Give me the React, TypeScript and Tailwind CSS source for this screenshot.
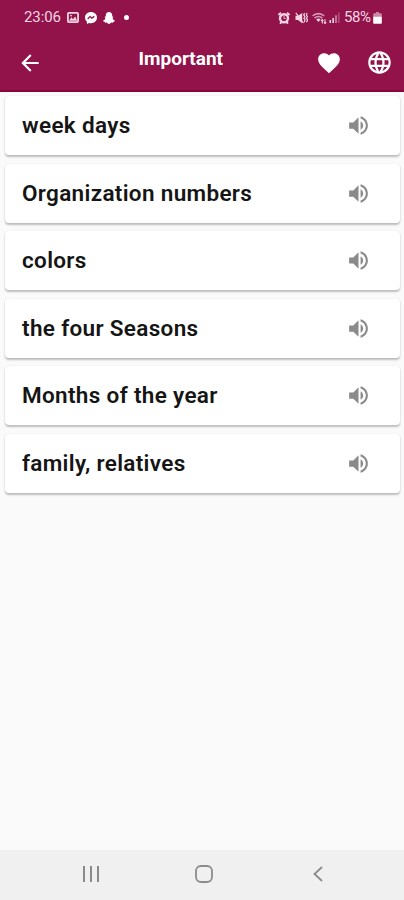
import {
  MdArrowBack,
  MdFavorite,
  MdLanguage,
  MdVolumeUp,
} from "react-icons/md";

const categories = [
  "week days",
  "Organization numbers",
  "colors",
  "the four Seasons",
  "Months of the year",
  "family, relatives",
];

const StatusBar = () => {
  return (
    <div className="flex h-[35px] items-center pl-6 pr-[22px] text-[#f3d5e2]">
      <span className="w-[37px] whitespace-nowrap text-[15px] tracking-[-0.1px]">
        23:06
      </span>
      {/* picture */}
      <svg className="ml-[6px] h-[11px] w-3" viewBox="0 0 12 11">
        <rect x="0.9" y="0.9" width="10.2" height="9.2" rx="1" fill="none" stroke="currentColor" strokeWidth="1.8" />
        <path d="M2 8.800 4.400 5.200 6 7.200 8.200 4.600l2 4.200z" fill="currentColor" />
        <circle cx="4" cy="3.600" r="0.9" fill="currentColor" />
      </svg>
      {/* messenger */}
      <svg className="ml-[6px] h-3 w-3 text-white" viewBox="0 0 12 12">
        <path d="M6 0C2.600 0 0 2.400 0 5.600c0 1.700.7 3.200 1.900 4.200V12l2-1.100c.7.200 1.400.3 2.100.3 3.400 0 6-2.400 6-5.600S9.400 0 6 0z" fill="currentColor" />
        <path d="M2.700 7 5 4.600l1.800 1.500L9.300 4.400" fill="none" stroke="#92124a" strokeWidth="1.300" />
      </svg>
      {/* snapchat */}
      <svg className="ml-[6px] h-3 w-3 text-white" viewBox="0 0 12 12">
        <path d="M6 0C4 0 2.800 1.400 2.800 3.300v1.300L1.500 4.700l.9 1.300C2 7.400 1.200 8.200 0 8.700c.3.800 1 .9 1.700 1l.3 1 1.700-.1C4.500 11.200 5.200 12 6 12s1.500-.8 2.300-1.400l1.700.1.300-1c.7-.1 1.400-.2 1.700-1C10.800 8.200 10 7.400 9.600 6l.9-1.300-1.300-.1V3.300C9.200 1.400 8 0 6 0z" fill="currentColor" />
      </svg>
      <span className="ml-[9px] size-[5px] rounded-full bg-white" />

      {/* alarm */}
      <svg className="ml-auto h-3 w-3" viewBox="0 0 12 12">
        <path d="M.4 3 3 .8M11.600 3 9 .8M2 11.600l1.500-1.600M10 11.600 8.500 10" stroke="currentColor" strokeWidth="2" />
        <circle cx="6" cy="6.200" r="4" fill="none" stroke="currentColor" strokeWidth="2.400" />
        <path d="M6 4v2.500h1.600" fill="none" stroke="currentColor" strokeWidth="0.900" />
      </svg>
      {/* vibrate with sound off */}
      <svg className="ml-[5px] h-3 w-[13px]" viewBox="0 0 13 12">
        <path d="M.5 3.800h2.500L7.200 1v10.200L3 8H.5z" fill="currentColor" />
        <path d="M.8.800 8.500 11" fill="none" stroke="currentColor" strokeWidth="1.200" />
        <path d="M9.600 1 8.700 3l1.300 1.500L8.900 6.200l1.200 1.600-.8 2.400M12.100 1l-.8 2 1.200 1.500-1.100 1.700 1.200 1.600-1 2.400" fill="none" stroke="currentColor" strokeWidth="1.200" />
      </svg>
      {/* wifi */}
      <svg className="ml-1 h-3 w-[15px]" viewBox="0 0 15 12">
        <path d="M.6 4C3.800.800 9 .800 12.200 4M2.600 6.100c2.200-2 5.400-2 7.600 0" fill="none" stroke="currentColor" strokeOpacity="0.700" strokeWidth="1.600" />
        <path d="M4.300 7.500a3.200 3.200 0 0 1 4.200 0L6.400 10z" fill="currentColor" />
        <path d="M10.300 11.500V7.500M9 8.800l1.300-1.300 1 1.300M13 7.300v4.200M11.900 10.300l1.100 1.200 1.200-1.200" fill="none" stroke="currentColor" strokeWidth="1.100" />
      </svg>
      {/* mobile signal */}
      <svg className="ml-[2px] h-[11px] w-[11px]" viewBox="0 0 11 11">
        <path d="M.5 8h1.600v3H.5zM3.400 6H5v5H3.400z" fill="currentColor" />
        <path d="M6.200 3.300h1.600V11H6.200z" fill="currentColor" fillOpacity="0.650" />
        <path d="M9 .500h1.600V11H9z" fill="currentColor" fillOpacity="0.300" />
      </svg>
      <span className="ml-1 w-[29px] whitespace-nowrap text-[15px] tracking-[-0.4px]">
        58%
      </span>
      {/* battery */}
      <svg className="h-3 w-[9px]" viewBox="0 0 9 12">
        <path d="M3 0h3v1.200h2q.8 0 .8.800V5H.2V2q0-.8.8-.8h2z" fill="currentColor" fillOpacity="0.600" />
        <path d="M.2 4.800h8.600V11q0 .8-.8.800H1Q.2 11.800.2 11z" fill="white" />
      </svg>
    </div>
  );
};

const Header = () => {
  return (
    <header className="h-[92px] border-b-2 border-[#870838] bg-[#92124a]">
      <StatusBar />
      <div className="flex h-[55px] items-center pl-[17px] pr-[11px] text-white">
        <button aria-label="Back">
          <MdArrowBack className="size-[26px]" />
        </button>
        <h1 className="ml-[95.500px] -mt-[7px] text-[19px] font-bold leading-6">
          Important
        </h1>
        <button className="ml-auto" aria-label="Favorites">
          <MdFavorite className="size-[26px]" />
        </button>
        <button className="ml-6" aria-label="Language">
          <MdLanguage className="size-[27px]" />
        </button>
      </div>
    </header>
  );
};

const CategoryCard = ({ title }: { title: string }) => {
  return (
    <li className="flex h-[59px] items-center justify-between rounded-[4px] bg-white pl-[17px] pr-[29px] shadow-[0_1.500px_2px_rgba(0,0,0,0.240),0_0_2px_rgba(0,0,0,0.040)]">
      <span className="-mt-px whitespace-nowrap text-[22.500px] font-semibold leading-[30px] tracking-[0.33px] text-[#151515]">
        {title}
      </span>
      <MdVolumeUp className="size-[25px] text-[#8a8a8a]" />
    </li>
  );
};

const NavigationBar = () => {
  return (
    <nav className="flex h-[50px] items-center bg-[#f0f0f0] pb-[2px] pl-[83px] text-[#8b8b8b]">
      <svg className="h-4 w-4" viewBox="0 0 16 16" fill="none" stroke="currentColor" strokeWidth="2">
        <path d="M1 0v16M8 0v16M15 0v16" />
      </svg>
      <svg className="ml-24 size-[18px]" viewBox="0 0 18 18" fill="none" stroke="currentColor" strokeWidth="1.800">
        <rect x="1" y="1" width="16" height="16" rx="5" />
      </svg>
      <svg className="ml-[100px] h-4 w-[10px]" viewBox="0 0 10 16" fill="none" stroke="currentColor" strokeWidth="1.800">
        <path d="M9 1 1.500 8 9 15" />
      </svg>
    </nav>
  );
};

const App = () => {
  return (
    <div className="flex h-[900px] w-[404px] flex-col overflow-hidden bg-[#fafafa] font-['Roboto',sans-serif]">
      <Header />
      <ul className="flex flex-1 flex-col gap-[8.500px] pl-[5px] pr-[4px] pt-1">
        {categories.map((title) => (
          <CategoryCard key={title} title={title} />
        ))}
      </ul>
      <NavigationBar />
    </div>
  );
};

export default App;
